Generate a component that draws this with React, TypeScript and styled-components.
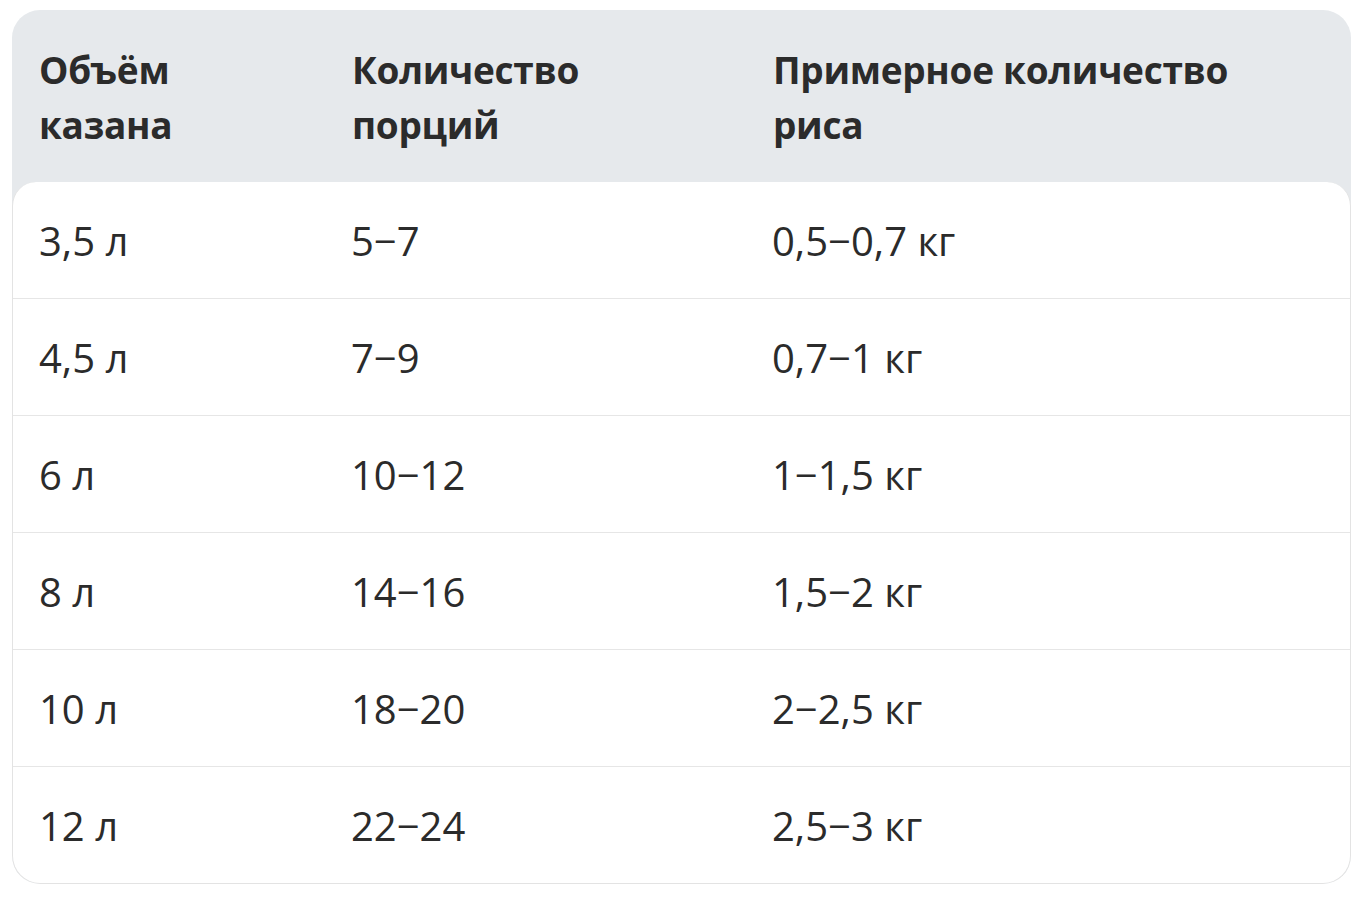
import React from 'react';
import styled, {createGlobalStyle} from "styled-components";

const rows = [
  ["3,5 л", "5−7", "0,5−0,7 кг"],
  ["4,5 л", "7−9", "0,7−1 кг"],
  ["6 л", "10−12", "1−1,5 кг"],
  ["8 л", "14−16", "1,5−2 кг"],
  ["10 л", "18−20", "2−2,5 кг"],
  ["12 л", "22−24", "2,5−3 кг"],
];

const heads = [
  ["Объём", "казана"],
  ["Количество", "порций"],
  ["Примерное количество", "риса"],
];

const App = () => {
  return (
    <>
      <GlobalStyle/>
      <Page>
        <Card>
          <HeadRow>
            {heads.map((h) => (
              <HeadCell key={h[0]}>
                {h[0]}
                <br/>
                {h[1]}
              </HeadCell>
            ))}
          </HeadRow>
          <Body>
            {rows.map((r, i) => (
              <Row key={r[0]} $last={i === rows.length - 1}>
                {r.map((c, j) => (
                  <Cell key={j}>{c}</Cell>
                ))}
              </Row>
            ))}
          </Body>
        </Card>
      </Page>
    </>
  );
};

const GlobalStyle = createGlobalStyle`
  body {
    margin: 0;
    background: #ffffff;
    font-family: "Open Sans", "Noto Sans", sans-serif;
    color: #2b2b2b;
  }
`;
const Page = styled.div`
  padding: 10px 10px 20px 12px;
`;
const Card = styled.div`
  background: #e6e9ec;
  border-radius: 28px;
  overflow: hidden;
`;
const HeadRow = styled.div`
  display: grid;
  grid-template-columns: 313px 421px 1fr;
  padding: 32px 0 30px;
`;
const HeadCell = styled.div`
  padding-left: 27px;
  font-size: 37px;
  font-weight: 700;
  line-height: 55px;
  letter-spacing: -0.3px;
  color: #2b2b2b;
`;
const Body = styled.div`
  background: #ffffff;
  border: 1px solid #e3e3e3;
  border-top: none;
  border-radius: 24px 24px 28px 28px;
`;
const Row = styled.div<{ $last?: boolean }>`
  display: grid;
  grid-template-columns: 312px 421px 1fr;
  align-items: center;
  height: 116px;
  border-bottom: ${p => p.$last ? "none" : "1px solid #e6e6e6"};
`;
const Cell = styled.div`
  padding-left: 26px;
  font-size: 40px;
  font-weight: 400;
  color: #2b2b2b;
`;
export default App;
